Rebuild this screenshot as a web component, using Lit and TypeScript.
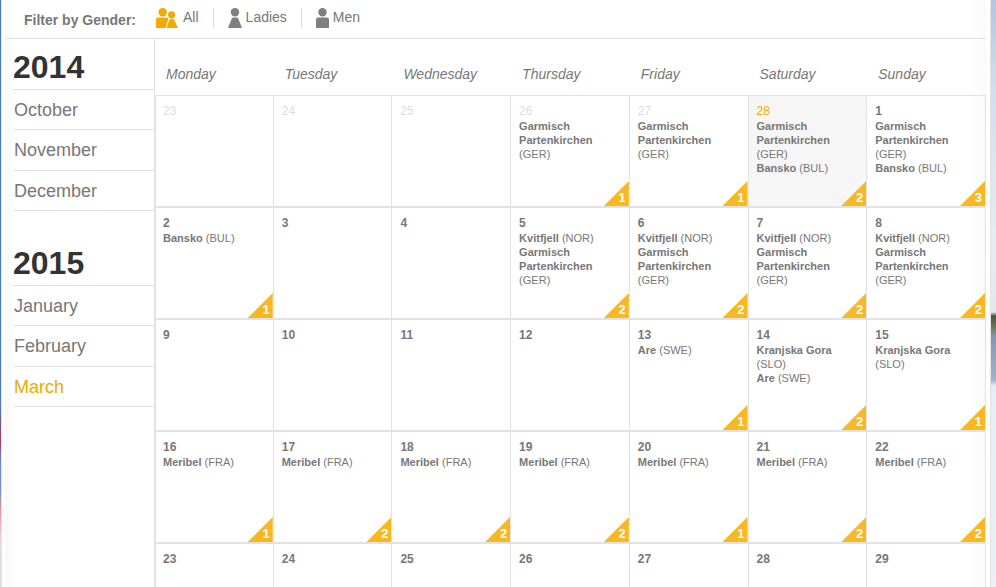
import { LitElement, html, svg, css } from "lit";
import { customElement, state } from "lit/decorators.js";
import { classMap } from "lit/directives/class-map.js";

type Place = [name: string, country: string];
interface Day {
  date: number;
  places: Place[];
  count?: number;
  outside?: boolean;
  today?: boolean;
}

const GAP: Place = ["Garmisch Partenkirchen", "GER"];
const BANSKO: Place = ["Bansko", "BUL"];
const KVITFJELL: Place = ["Kvitfjell", "NOR"];
const ARE: Place = ["Are", "SWE"];
const KRANJSKA: Place = ["Kranjska Gora", "SLO"];
const MERIBEL: Place = ["Meribel", "FRA"];

const day = (date: number, places: Place[] = [], count?: number): Day => ({ date, places, count });

const WEEKS: Day[][] = [
  [
    { ...day(23), outside: true },
    { ...day(24), outside: true },
    { ...day(25), outside: true },
    { ...day(26, [GAP], 1), outside: true },
    { ...day(27, [GAP], 1), outside: true },
    { ...day(28, [GAP, BANSKO], 2), today: true },
    day(1, [GAP, BANSKO], 3),
  ],
  [
    day(2, [BANSKO], 1),
    day(3),
    day(4),
    ...[5, 6, 7, 8].map((d) => day(d, [KVITFJELL, GAP], 2)),
  ],
  [
    day(9),
    day(10),
    day(11),
    day(12),
    day(13, [ARE], 1),
    day(14, [KRANJSKA, ARE], 2),
    day(15, [KRANJSKA], 1),
  ],
  [1, 2, 2, 2, 1, 2, 2].map((n, i) => day(16 + i, [MERIBEL], n)),
  [23, 24, 25, 26, 27, 28, 29].map((d) => day(d)),
];

const WEEKDAYS = ["Monday", "Tuesday", "Wednesday", "Thursday", "Friday", "Saturday", "Sunday"];

const SEASON = [
  { year: 2014, months: ["October", "November", "December"] },
  { year: 2015, months: ["January", "February", "March"] },
];

const MAN = svg`<circle cx="6.5" cy="4.2" r="4.2"/><path d="M0 20v-8.500q0-2 2-2h9q2 0 2 2V20z"/>`;
const LADY = svg`<circle cx="7" cy="4.2" r="4.200"/><path d="M0 20L3.800 10.600Q4.200 9.500 5.400 9.500h3.200q1.200 0 1.600 1.100L14 20z"/>`;

const FILTERS = [
  {
    name: "All",
    icon: html`<svg width="22" height="20" viewBox="0 0 22 20" aria-hidden="true">
      <circle cx="6.7" cy="4.2" r="4.2"/><path d="M0 20v-8.5q0-2 2-2h8.500q1.500 0 1.900 1.200L9.500 20z"/>
      <circle cx="15.6" cy="6.800" r="3.600"/><path d="M10.300 20l3-7.900q.4-1.100 1.500-1.100h2q1.100 0 1.500 1.100L22 20z"/>
    </svg>`,
  },
  { name: "Ladies", icon: html`<svg width="14" height="20" viewBox="0 0 14 20" aria-hidden="true">${LADY}</svg>` },
  { name: "Men", icon: html`<svg width="13" height="20" viewBox="0 0 13 20" aria-hidden="true">${MAN}</svg>` },
];

@customElement("gender-filter")
export class GenderFilter extends LitElement {
  @state() private selected = "All";

  static styles = css`
    :host {
      display: flex;
      align-items: flex-start;
      height: 38px;
      padding-left: 19px;
      border-bottom: 1px solid #e2e2e2;
      color: #777;
      font-size: 14px;
    }
    .label {
      margin-top: 12px;
      line-height: 16px;
      font-weight: bold;
    }
    .options {
      display: flex;
      margin: 8px 0 0 20px;
    }
    button {
      display: flex;
      gap: 4px;
      height: 20px;
      margin: 0;
      padding: 0 14px 0 0;
      border: 0;
      background: none;
      color: inherit;
      font: inherit;
      line-height: 18px;
      cursor: pointer;
    }
    button + button {
      padding-left: 14px;
      border-left: 1px solid #ddd;
    }
    svg {
      fill: #808080;
    }
    .on svg {
      margin-right: 1px;
      fill: #f2a900;
    }
  `;

  render() {
    return html`
      <span class="label" id="label">Filter by Gender:</span>
      <div class="options" role="group" aria-labelledby="label">
        ${FILTERS.map(
          (f) => html`<button
            type="button"
            class=${classMap({ on: f.name === this.selected })}
            aria-pressed=${f.name === this.selected}
            @click=${() => (this.selected = f.name)}
          >${f.icon}<span>${f.name}</span></button>`
        )}
      </div>
    `;
  }
}

@customElement("month-nav")
export class MonthNav extends LitElement {
  @state() private current = "March";

  static styles = css`
    :host {
      display: flex;
      flex-direction: column;
      gap: 24px;
      padding-left: 8px;
      border-right: 1px solid #e2e2e2;
    }
    h2 {
      margin: 0;
      padding: 8px 0 2px;
      border-bottom: 1px solid #e2e2e2;
      color: #333;
      font-size: 32px;
      line-height: 40px;
    }
    ul {
      display: grid;
      grid-auto-rows: 1fr;
      height: 121px;
      margin: 0 0 0 1px;
      padding: 0;
      list-style: none;
    }
    li {
      border-bottom: 1px solid #e2e2e2;
    }
    a {
      display: block;
      padding-top: 1px;
      color: #777;
      font-size: 18px;
      line-height: 38px;
      text-decoration: none;
    }
    a.current {
      color: #f2a900;
    }
  `;

  render() {
    return SEASON.map(
      (s) => html`<section>
        <h2>${s.year}</h2>
        <ul>
          ${s.months.map(
            (m) => html`<li>
              <a href="#${m}" class=${classMap({ current: m === this.current })}
                @click=${() => (this.current = m)}>${m}</a>
            </li>`
          )}
        </ul>
      </section>`
    );
  }
}

@customElement("race-calendar")
export class RaceCalendar extends LitElement {
  static styles = css`
    :host {
      display: block;
      min-width: 0;
    }
    table {
      width: 100%;
      table-layout: fixed;
      border-collapse: separate;
      border-spacing: 0;
      color: #777;
    }
    th {
      box-sizing: border-box;
      height: 57px;
      padding: 14px 0 0 11px;
      border-bottom: 1px solid #e2e2e2;
      font-size: 14px;
      font-style: italic;
      font-weight: normal;
      text-align: left;
    }
    td {
      position: relative;
      box-sizing: border-box;
      height: 112px;
      padding: 7px 8px 0;
      border-right: 1px solid #e2e2e2;
      border-bottom: 2px solid #e2e2e2;
      font-size: 11px;
      line-height: 14px;
      vertical-align: top;
    }
    td:first-child {
      padding-left: 7px;
      border-left: 1px solid #e2e2e2;
    }
    td.today {
      background: #f6f6f6;
    }
    .date {
      display: block;
      font-size: 12px;
      font-weight: bold;
      line-height: 16px;
    }
    .outside .date,
    .today .date {
      font-weight: normal;
    }
    .outside .date {
      color: #ddd;
    }
    .today .date {
      color: #f2a900;
    }
    .place {
      display: block;
    }
    .count {
      position: absolute;
      right: 0;
      bottom: 0;
      box-sizing: border-box;
      width: 25px;
      height: 25px;
      padding: 9px 3px 0 0;
      background: #f9b81f;
      clip-path: polygon(100% 0, 100% 100%, 0 100%);
      color: #fff;
      font-size: 13px;
      font-weight: bold;
      line-height: 16px;
      text-align: right;
    }
  `;

  private cell(d: Day) {
    return html`<td class=${classMap({ outside: !!d.outside, today: !!d.today })}>
      <span class="date">${d.date}</span>
      ${d.places.map(([name, country]) => html`<span class="place"><b>${name}</b> (${country})</span>`)}
      ${d.count ? html`<span class="count">${d.count}</span>` : null}
    </td>`;
  }

  render() {
    return html`<table>
      <thead>
        <tr>${WEEKDAYS.map((w) => html`<th scope="col">${w}</th>`)}</tr>
      </thead>
      <tbody>
        ${WEEKS.map((week) => html`<tr>${week.map((d) => this.cell(d))}</tr>`)}
      </tbody>
    </table>`;
  }
}

@customElement("app-root")
export class AppRoot extends LitElement {
  static styles = css`
    :host {
      display: grid;
      grid-template-columns: 1px minmax(0, 1fr) 5px;
      height: 100vh;
      overflow: hidden auto;
      scrollbar-width: none;
      font-family: "Liberation Sans", Arial, sans-serif;
    }
    .left {
      background: linear-gradient(#4a7cc8 0 405px, #a03a68 440px, #6f8fd0 465px 490px, #f090a0 510px, #e8d8e0 540px, #dcdcdc 560px);
    }
    .right {
      background: linear-gradient(#b4c4e0, #d0dcec 80px, #e8ecf2 240px, #e4e8ee 312px, #4a5540 316px, #6f7a58 328px, #8494b0 336px, #a4b2cc 380px, #e6ecf4 386px, #eef1f6);
    }
    main {
      padding: 0 4px 0 3px;
      border: solid #e2e2e2;
      border-width: 0 1px;
      background: #fff;
    }
    .sheet {
      background: linear-gradient(90deg, #f8f8f8, #fff 12px calc(100% - 20px), #fafafa);
    }
    .body {
      display: grid;
      grid-template-columns: 150px minmax(0, 1fr);
    }
  `;

  render() {
    return html`
      <div class="left"></div>
      <main>
        <div class="sheet">
          <gender-filter></gender-filter>
          <div class="body">
            <month-nav></month-nav>
            <race-calendar></race-calendar>
          </div>
        </div>
      </main>
      <div class="right"></div>
    `;
  }
}
